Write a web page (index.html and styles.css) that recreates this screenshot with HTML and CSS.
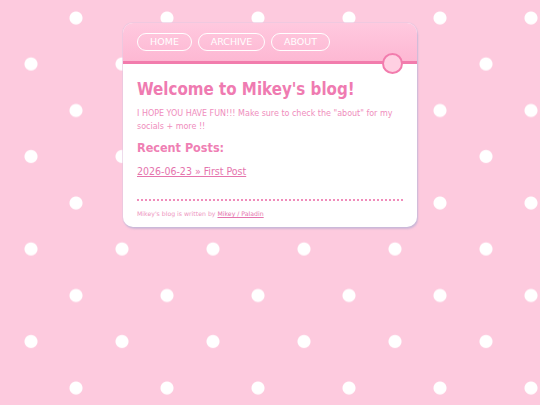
FILE: index.html
```html
<!DOCTYPE html>
<html>
<head>
<meta charset="utf-8">
<link rel="stylesheet" href="styles.css">
</head>
<body>
<div class="card">
  <div class="header">
    <nav class="nav">
      <a class="pill" href="#">HOME</a>
      <a class="pill" href="#">ARCHIVE</a>
      <a class="pill" href="#">ABOUT</a>
    </nav>
    <span class="knob"></span>
  </div>
  <div class="content">
    <h1 class="title">Welcome to Mikey's blog!</h1>
    <p class="intro">I HOPE YOU HAVE FUN!!! Make sure to check the "about" for my socials + more !!</p>
    <h2 class="subtitle">Recent Posts:</h2>
    <a class="post" href="#">2026-06-23 » First Post</a>
    <div class="footer">Mikey's blog is written by <a class="flink" href="#">Mikey / Paladin</a></div>
  </div>
</div>
</body>
</html>
```
FILE: styles.css
```css
html, body {
  margin: 0;
  padding: 0;
}
body {
  width: 540px;
  height: 405px;
  overflow: hidden;
  font-family: "DejaVu Sans", Verdana, sans-serif;
  background-color: #fdcade;
  background-image:
    radial-gradient(circle at 31px 64px, #fff 0, #fff 6px, rgba(255,255,255,0) 7px),
    radial-gradient(circle at 76px 18px, #fff 0, #fff 6px, rgba(255,255,255,0) 7px);
  background-size: 91px 92.5px;
  background-position: 0 0;
  padding-top: 23px;
  box-sizing: border-box;
}
.card {
  width: 294px;
  margin: 0 auto;
  background: #fff;
  border-radius: 10px;
  box-shadow: 1px 2px 2px rgba(170, 170, 210, 0.55), 0 0 0 1px rgba(230, 200, 225, 0.6);
}
.header {
  position: relative;
  height: 38px;
  border-radius: 10px 10px 0 0;
  background: linear-gradient(#ffc9df, #fdb8d3);
  border-bottom: 3px solid #f27cad;
}
.nav {
  display: flex;
  gap: 6px;
  padding: 10px 0 0 14px;
}
.pill {
  display: block;
  box-sizing: border-box;
  height: 18px;
  line-height: 15px;
  border: 1.5px solid #fff;
  border-radius: 10px;
  color: #fff;
  font-size: 9.5px;
  text-decoration: none;
  text-align: center;
}
.pill:nth-child(1) { width: 55px; }
.pill:nth-child(2) { width: 67px; }
.pill:nth-child(3) { width: 59px; }
.knob {
  position: absolute;
  right: 14px;
  bottom: -13px;
  width: 17px;
  height: 17px;
  border: 2.5px solid #f27cad;
  border-radius: 50%;
  background: #ffd0e2;
}
.content {
  padding: 14px 14px 10px 14px;
}
.title {
  margin: 0;
  font-family: "DejaVu Sans Condensed", "DejaVu Sans", sans-serif;
  font-size: 16.8px;
  font-weight: bold;
  color: #ef7bb1;
  line-height: 22px;
}
.intro {
  margin: 7px 0 0 0;
  font-family: "DejaVu Sans Condensed", "DejaVu Sans", sans-serif;
  font-size: 8.9px;
  line-height: 13px;
  color: #ef8dbd;
}
.subtitle {
  margin: 7px 0 0 0;
  font-family: "DejaVu Sans Condensed", "DejaVu Sans", sans-serif;
  font-size: 12.5px;
  font-weight: bold;
  color: #ef80b4;
  line-height: 16px;
}
.post {
  display: inline-block;
  margin-top: 8px;
  font-family: "DejaVu Sans Condensed", "DejaVu Sans", sans-serif;
  font-size: 10.5px;
  line-height: 14px;
  color: #e574ad;
  text-decoration: underline;
}
.footer {
  margin-top: 20px;
  padding-top: 9px;
  border-top: 2px dotted #f08dbb;
  font-size: 6.2px;
  color: #ee95c0;
}
.flink {
  color: #e574ad;
}
```
